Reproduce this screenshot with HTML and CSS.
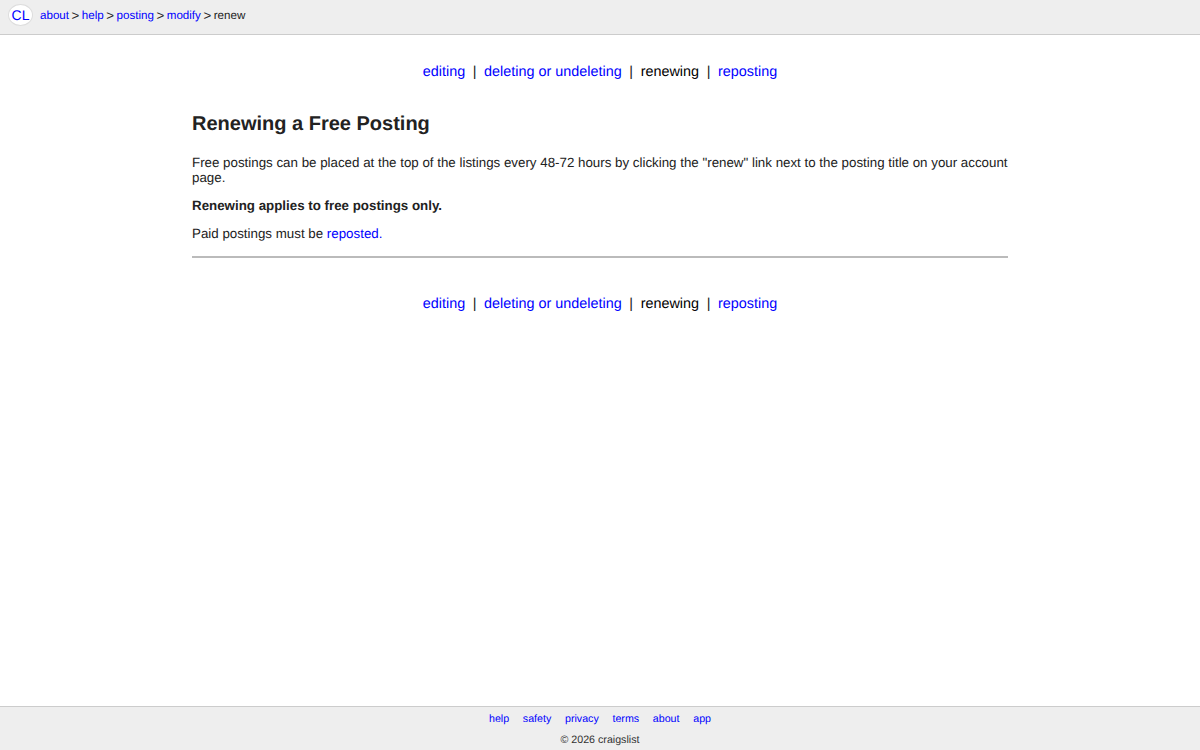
FILE: index.html
```html
<!DOCTYPE html>
<html lang="en">
<head>
<meta charset="utf-8">
<title>renew</title>
<link rel="stylesheet" href="styles.css">
</head>
<body>
<header class="topbar">
  <a class="logo" href="#">CL</a>
  <nav class="crumbs">
    <a href="#">about</a><span class="sep">&gt;</span><a href="#">help</a><span class="sep">&gt;</span><a href="#">posting</a><span class="sep">&gt;</span><a href="#">modify</a><span class="sep">&gt;</span><span>renew</span>
  </nav>
</header>
<main class="content">
  <nav class="subnav">
    <a href="#">editing</a><span class="bar">|</span><a href="#">deleting or undeleting</a><span class="bar">|</span><span>renewing</span><span class="bar">|</span><a href="#">reposting</a>
  </nav>
  <h1>Renewing a Free Posting</h1>
  <p>Free postings can be placed at the top of the listings every 48-72 hours by clicking the "renew" link next to the posting title on your account page.</p>
  <p><strong>Renewing applies to free postings only.</strong></p>
  <p>Paid postings must be <a href="#">reposted.</a></p>
  <hr>
  <nav class="subnav lower">
    <a href="#">editing</a><span class="bar">|</span><a href="#">deleting or undeleting</a><span class="bar">|</span><span>renewing</span><span class="bar">|</span><a href="#">reposting</a>
  </nav>
</main>
<footer class="footer">
  <nav class="footlinks">
    <a href="#">help</a><a href="#">safety</a><a href="#">privacy</a><a href="#">terms</a><a href="#">about</a><a href="#">app</a>
  </nav>
  <div class="copy">© 2026 craigslist</div>
</footer>
</body>
</html>
```
FILE: styles.css
```css
* { box-sizing: border-box; }
html, body { height: 100%; }
body {
  margin: 0;
  display: flex;
  flex-direction: column;
  min-height: 750px;
  font-family: "Liberation Sans", Arial, sans-serif;
  font-size: 13.33px;
  color: #222;
  background: #fff;
  text-rendering: geometricPrecision;
}
a { color: #00f; text-decoration: none; }
.topbar {
  height: 35px;
  flex: none;
  display: flex;
  align-items: center;
  gap: 7px;
  padding: 0 0 5px 8px;
  background: #eee;
  border-bottom: 1px solid #ccc;
  font-size: 11.6px;
}
.logo {
  width: 25px;
  height: 22px;
  border-radius: 50%;
  border: 1px solid #ddd;
  background: #fff;
  display: flex;
  align-items: center;
  justify-content: center;
  font-size: 14px;
}
.crumbs { display: flex; margin-top: 2px; }
.sep { margin: 0 2.5px; font-size: 13.33px; line-height: 14px; }
.content {
  flex: 1;
  width: 816px;
  margin: 0 auto;
}
.subnav {
  display: flex;
  justify-content: center;
  margin-top: 28px;
  font-size: 14.4px;
  line-height: 18px;
}
.bar { margin: 0 7.6px; color: #222; }
.subnav span:not(.bar) { color: #000; }
h1 {
  margin: 30px 0 0;
  font-size: 20px;
  line-height: 26px;
}
p {
  margin: 13px 0 0;
  line-height: 15px;
}
h1 + p { margin-top: 18px; }
hr {
  margin: 15px 0 0;
  border: 0;
  border-top: 2px solid #bbb;
}
.lower { margin-top: 37px; }
.footer {
  height: 44px;
  flex: none;
  background: #eee;
  border-top: 1px solid #ccc;
  font-size: 10.67px;
  text-align: center;
}
.footlinks {
  display: flex;
  justify-content: center;
  gap: 13.73px;
  padding-top: 5px;
  line-height: 14px;
}
.copy { margin-top: 7px; line-height: 14px; color: #333; }
```
